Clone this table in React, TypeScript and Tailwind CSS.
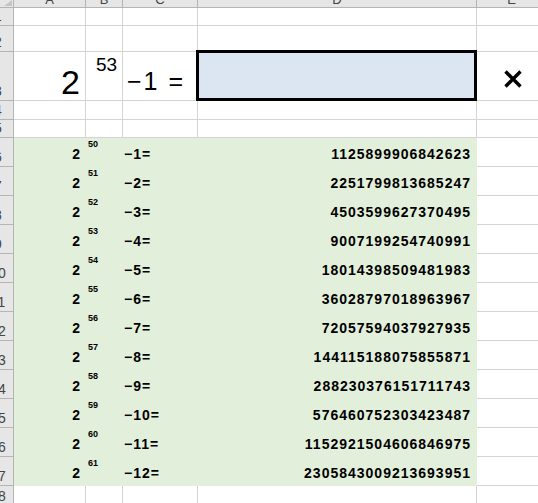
import React from "react";

const font = "font-['Liberation_Sans',Arial,sans-serif]";

const grid = "border-r border-b border-[#d4d4d4]";
const green = "bg-[#e2efda] border-r border-b border-[#e2efda]";

// the sheet shows 2^n - 1 in every row, whatever the label says
const rows = Array.from({ length: 12 }, (_, i) => {
  const exp = 50 + i;
  const value = (2n ** BigInt(exp) - 1n).toString();
  return { n: 6 + i, exp, minus: i + 1, value };
});

function RowHead({ n }: { n: number }) {
  return (
    <div className="relative w-[14px] shrink-0 overflow-hidden border-r border-b border-[#b4b4b4] bg-[#e6e6e6]">
      <div className="absolute bottom-[2px] left-[-17px] w-[30px] text-center text-[14px] leading-none text-[#444]">
        {n}
      </div>
    </div>
  );
}

function EmptyRow({ n, h }: { n: number; h: string }) {
  return (
    <div className={`flex ${h}`}>
      <RowHead n={n} />
      <div className={`w-[72px] shrink-0 ${grid}`} />
      <div className={`w-[37px] shrink-0 ${grid}`} />
      <div className={`w-[75px] shrink-0 ${grid}`} />
      <div className={`w-[279px] shrink-0 ${grid}`} />
      <div className={`w-[70px] shrink-0 ${grid}`} />
    </div>
  );
}

export default function App() {
  const colHead =
    "flex shrink-0 items-end justify-center overflow-hidden border-r border-b border-[#b4b4b4] bg-[#e6e6e6]";

  return (
    <div className={`h-[503px] w-[538px] overflow-hidden bg-white text-black ${font}`}>
      {/* column headers, mostly scrolled out of view */}
      <div className="flex h-[8px]">
        <div className="w-[14px] shrink-0 border-r border-b border-[#b4b4b4] bg-[#e6e6e6]">
          <svg width="13" height="7" viewBox="0 0 13 7">
            <polygon points="12,0 12,6 4,6" fill="#c4c4c4" />
          </svg>
        </div>
        {[
          ["A", "w-[72px]"],
          ["B", "w-[37px]"],
          ["C", "w-[75px]"],
          ["D", "w-[279px]"],
          ["E", "w-[70px]"],
        ].map(([l, w]) => (
          <div key={l} className={`${colHead} ${w}`}>
            <span className="mb-[1px] text-[13px] leading-[13px] text-[#444]">{l}</span>
          </div>
        ))}
      </div>

      <EmptyRow n={1} h="h-[18px]" />
      <EmptyRow n={2} h="h-[26px]" />

      {/* question row */}
      <div className="flex h-[49px]">
        <RowHead n={3} />
        <div className={`flex w-[72px] shrink-0 items-end justify-end pr-[5px] pb-[3px] ${grid}`}>
          <span className="text-[34px] leading-[30px]">2</span>
        </div>
        <div className={`w-[37px] shrink-0 pt-[3px] pl-[10px] ${grid}`}>
          <span className="block text-[19px] leading-none">53</span>
        </div>
        <div className={`flex w-[75px] shrink-0 items-end pl-[4px] pb-[6px] ${grid}`}>
          <span className="whitespace-pre text-[25px] leading-none tracking-[2px]">−1 =</span>
        </div>
        <div className={`relative w-[279px] shrink-0 ${grid}`}>
          <div className="absolute -top-[2px] -right-[1px] -bottom-[1px] -left-[2px] z-10 border-[3px] border-black bg-[#dce6f2]" />
        </div>
        <div className={`flex w-[70px] shrink-0 justify-center pt-[18px] pl-[3px] ${grid}`}>
          <svg width="20" height="18" viewBox="0 0 20 18">
            <path d="M2.5 1.5 L17.5 16.5 M17.5 1.5 L2.5 16.5" stroke="#000" strokeWidth="3.4" fill="none" />
          </svg>
        </div>
      </div>

      <EmptyRow n={4} h="h-[19px]" />
      <EmptyRow n={5} h="h-[18px]" />

      {rows.map((r) => (
        <div key={r.n} className="flex h-[29px]">
          <RowHead n={r.n} />
          <div className={`flex w-[72px] shrink-0 items-end justify-end pr-[5px] pb-[5px] ${green}`}>
            <span className="text-[14px] font-bold leading-none">2</span>
          </div>
          <div className={`w-[37px] shrink-0 pt-[2px] pl-[2px] ${green}`}>
            <span className="block text-[9px] font-bold leading-none">{r.exp}</span>
          </div>
          <div className={`flex w-[75px] shrink-0 items-end pl-[1px] pb-[5px] ${green}`}>
            <span className="text-[14px] font-bold leading-none tracking-[1px]">−{r.minus}=</span>
          </div>
          <div className={`flex w-[279px] shrink-0 items-end justify-end pr-[5px] pb-[5px] ${green}`}>
            <span className="text-[14px] font-bold leading-none tracking-[1px]">{r.value}</span>
          </div>
          <div className={`w-[70px] shrink-0 ${grid}`} />
        </div>
      ))}

      <EmptyRow n={18} h="h-[20px]" />
    </div>
  );
}
